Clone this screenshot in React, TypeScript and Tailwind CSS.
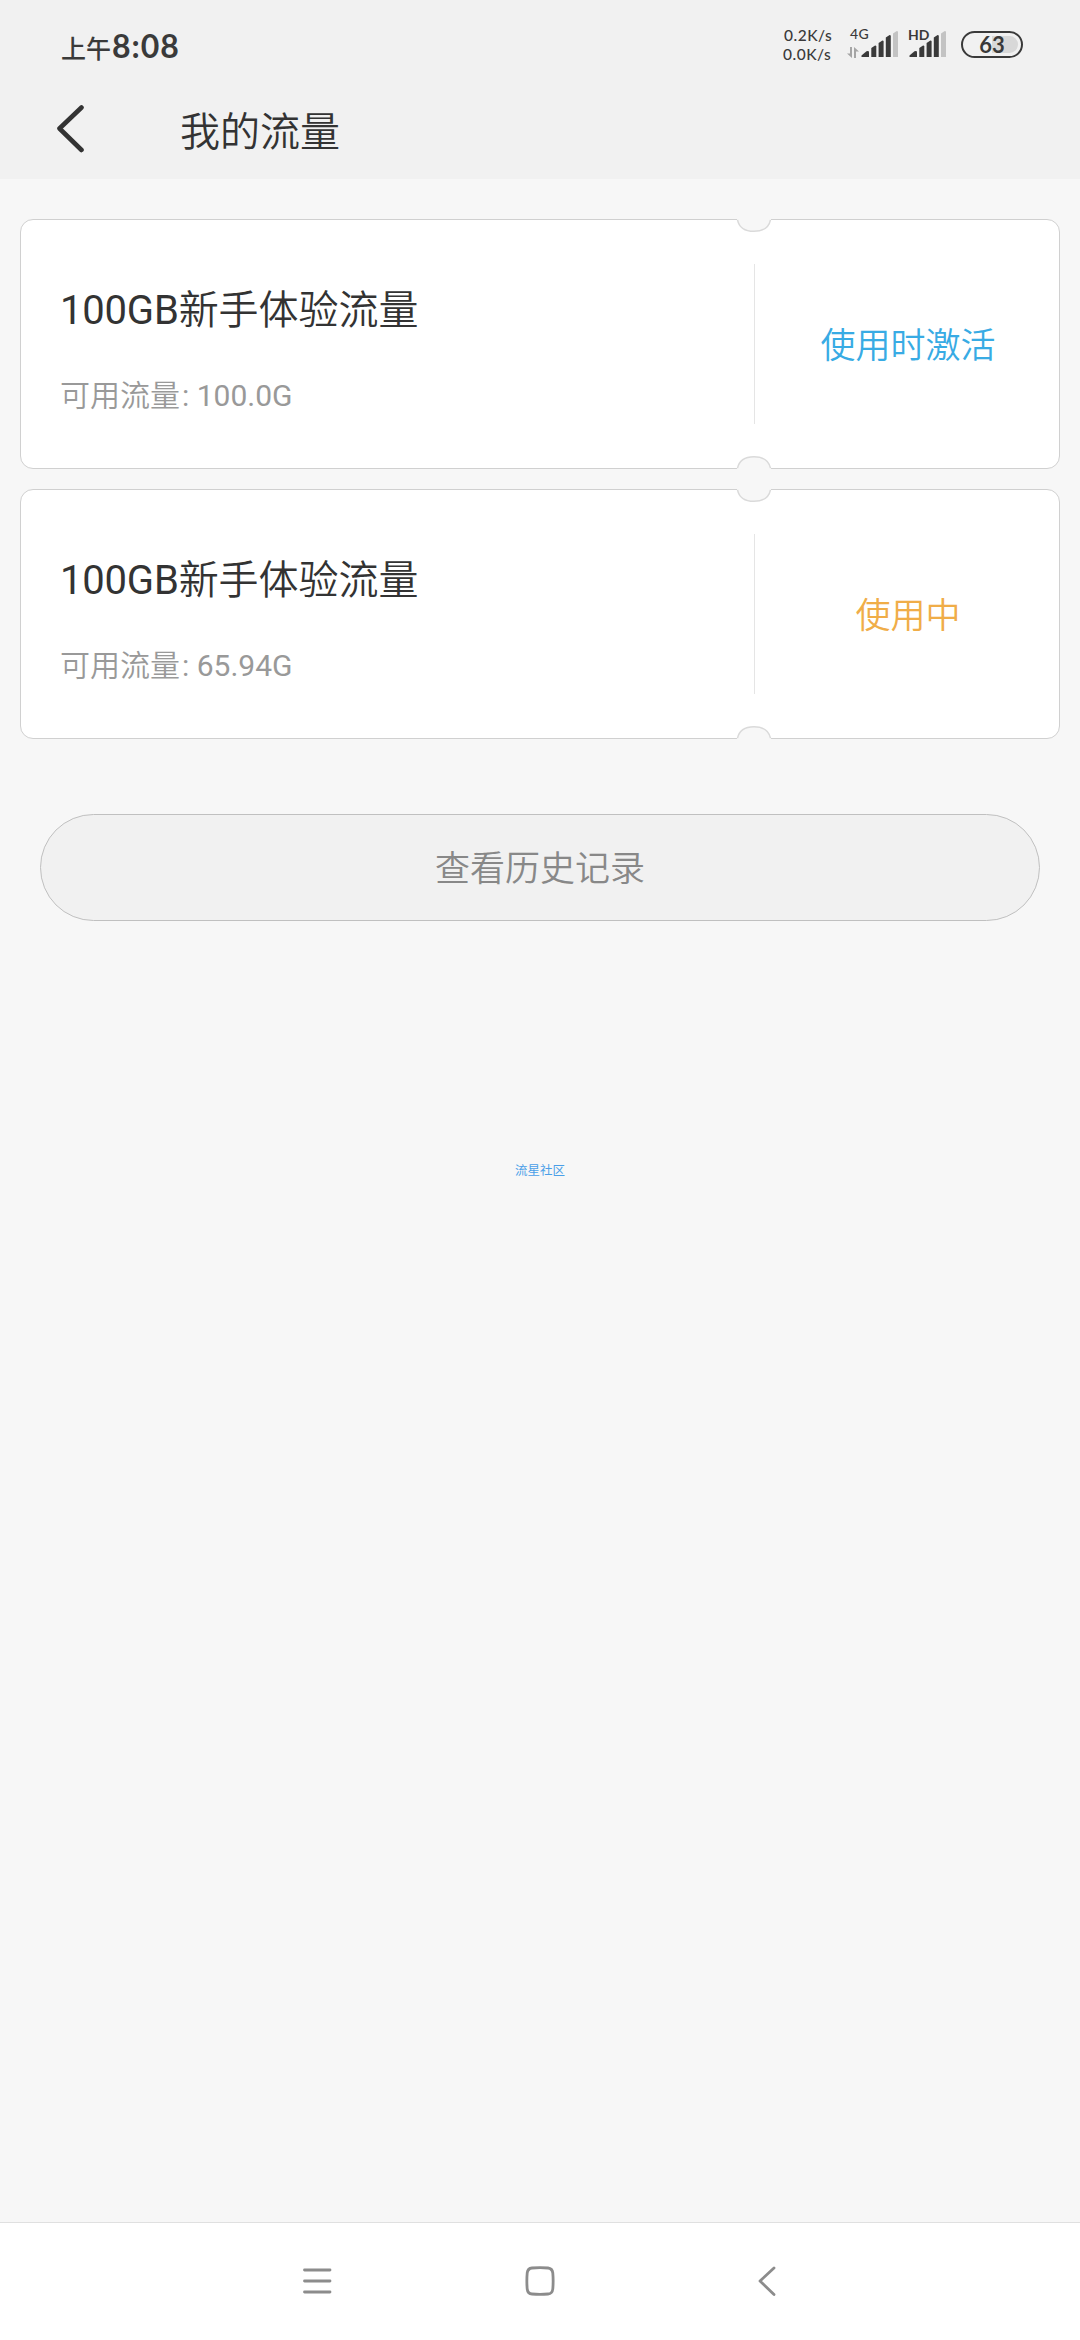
type Coupon = {
  id: number;
  size: string;
  name: string;
  remaining: string;
  status: string;
  active: boolean;
};

const coupons: Coupon[] = [
  { id: 1, size: "100GB", name: "新手体验流量", remaining: "100.0G", status: "使用时激活", active: false },
  { id: 2, size: "100GB", name: "新手体验流量", remaining: "65.94G", status: "使用中", active: true },
];

function SignalBars() {
  return (
    <svg className="h-[28px] w-[38px]" viewBox="0 0 38 28" fill="#3a3a3a">
      <path d="M0.500 27v-1.500l5-4.200q2.500-1 2.500 1V27z" />
      <path d="M10.300 27V18l3.800-2.500q1.200 0 1.200 1V27z" />
      <path d="M17.600 27V13l3.800-2.500q1.200 0 1.200 1V27z" />
      <path d="M24.800 27V7.500l3.800-2.500q1.200 0 1.200 1V27z" />
      <path fill="#c3c3c3" d="M32 27V3.500l3.800-2.500q1.200 0 1.200 1V27z" />
    </svg>
  );
}

function StatusBar() {
  return (
    <div className="flex h-[90px] items-start justify-between pl-[61px] pr-[57px] text-[#3a3a3a]">
      <div className="flex items-baseline pt-[26px] leading-[40px]">
        <span className="w-[51px] text-[25px] font-medium">上午</span>
        <span className="font-[Lato,sans-serif] text-[32px] font-bold tracking-[1px]">8:08</span>
      </div>
      <div className="flex items-start pt-[26px]">
        <div className="flex w-[64px] flex-col font-[Lato,sans-serif] text-[15.500px] leading-[19px] font-medium tracking-[0.500px]">
          <span className="pl-[1px]">0.2K/s</span>
          <span>0.0K/s</span>
        </div>
        <div className="relative mt-[4px] flex w-[62px] pl-[14px]">
          <span className="absolute -top-[4px] left-[3px] font-[Lato,sans-serif] text-[14px] leading-[16px] font-medium tracking-[0.500px]">4G</span>
          <svg className="absolute top-[16px] left-0 h-[13px] w-[12px]" viewBox="0 0 12 13" fill="#a5a5a5">
            <path d="M3 1h2v11L0 7.500h3zM7 12V1l5 4.500H9V12z" />
          </svg>
          <SignalBars />
        </div>
        <div className="relative mt-[4px] w-[52px]">
          <span className="absolute -top-[3px] -left-[1px] font-[Lato,sans-serif] text-[14px] leading-[16px] font-bold">HD</span>
          <SignalBars />
        </div>
        <div className="mt-[5px] flex h-[27px] w-[62px] rounded-full border-[2.500px] border-[#3a3a3a] p-[3px]">
          <div className="flex flex-1 items-center justify-center rounded-full bg-linear-to-r from-transparent from-50% to-[#d8d8d8] to-50% font-[Lato,sans-serif] text-[22px] leading-none font-bold">
            63
          </div>
        </div>
      </div>
    </div>
  );
}

function Header() {
  return (
    <header className="h-[179px] bg-[#f1f1f1]">
      <StatusBar />
      <div className="flex h-[80px] items-center pl-[56px]">
        <button aria-label="返回">
          <svg className="h-[50px] w-[30px]" viewBox="0 0 30 50" fill="none" stroke="#333" strokeWidth="4.600" strokeLinecap="round" strokeLinejoin="round">
            <path d="M25.500 2.500L3.500 23.500L25.500 45" />
          </svg>
        </button>
        <h1 className="ml-[94px] pt-[5px] text-[40px] leading-[60px] font-[350] text-[#333]">我的流量</h1>
      </div>
    </header>
  );
}

function Notch({ bottom = false }: { bottom?: boolean }) {
  return (
    <svg
      className={bottom ? "absolute -bottom-[2px] left-[715px] rotate-180" : "absolute -top-[2px] left-[715px]"}
      width="36"
      height="15"
      viewBox="0 0 36 15"
    >
      <path d="M1 0V1.500C3 9 9 13.500 18 13.500S33 9 35 1.500V0z" fill="#f7f7f7" />
      <path d="M1.500 1.800C3 9 9 13.300 18 13.300S33 9 34.500 1.800" fill="none" stroke="#dadada" strokeWidth="1.500" />
    </svg>
  );
}

function CouponCard({ coupon }: { coupon: Coupon }) {
  return (
    <div className="relative flex h-[250px] items-center rounded-[13px] border-[1.500px] border-[#d0d0d0] bg-white">
      <div className="flex w-[733px] flex-col pt-[11px] pl-[39px]">
        <h2 className="text-[40px] leading-[60px] font-[350] text-[#333]">
          <span className="font-normal tracking-[-0.200px]">{coupon.size}</span>
          {coupon.name}
        </h2>
        <p className="mt-[33px] text-[30px] leading-[44px] font-[350] text-[#999]">
          可用流量<span className="ml-[2px] font-normal">: {coupon.remaining}</span>
        </p>
      </div>
      <div className="flex h-[160px] flex-1 items-center justify-center border-l border-[#e5e5e5]">
        <span className={`pt-[5px] pl-[2px] text-[35px] leading-[52px] font-[350] ${coupon.active ? "text-[#f0ad48]" : "text-[#38abe4]"}`}>
          {coupon.status}
        </span>
      </div>
      <Notch />
      <Notch bottom />
    </div>
  );
}

function NavBar() {
  return (
    <nav className="flex h-[118px] items-center border-t border-[#e0e0e0] bg-white pb-[2px] pl-[302px]">
      <svg className="h-[32px] w-[30px]" viewBox="0 0 30 32" stroke="#8c8c8c" strokeWidth="2.800" strokeLinecap="round">
        <path d="M2.500 5h25.500M2.500 16h25.500M2.500 27h25.500" />
      </svg>
      <svg className="ml-[192px] h-[32px] w-[32px]" viewBox="0 0 32 32" fill="none" stroke="#8c8c8c" strokeWidth="2.800">
        <path d="M8 3Q16 2.200 24 3Q28.300 3.500 28.800 8Q29.500 16 28.800 24Q28.300 28.700 24 29Q16 29.800 8 29Q3.700 28.700 3.200 24Q2.500 16 3.200 8Q3.700 3.500 8 3z" />
      </svg>
      <svg className="ml-[201px] h-[32px] w-[20px]" viewBox="0 0 20 32" fill="none" stroke="#8c8c8c" strokeWidth="2.800" strokeLinecap="round" strokeLinejoin="round">
        <path d="M17 3L3 16L17 29.500" />
      </svg>
    </nav>
  );
}

export default function App() {
  return (
    <div className="flex h-[2340px] w-[1080px] flex-col bg-[#f7f7f7] font-[Roboto,'Noto_Sans_CJK_SC',sans-serif]">
      <Header />
      <main className="flex flex-1 flex-col px-[20px] pt-[40px]">
        <div className="flex flex-col gap-5">
          {coupons.map((coupon) => (
            <CouponCard key={coupon.id} coupon={coupon} />
          ))}
        </div>
        <button className="mx-[20px] mt-[75px] h-[107px] rounded-full border border-[#c0c0c0] bg-[#f1f1f1] pt-[5px] text-[35px] font-[350] text-[#888]">
          查看历史记录
        </button>
        <a className="mt-[240px] text-center text-[12.500px] leading-[20px] text-[#4a9fe8]">流星社区</a>
      </main>
      <NavBar />
    </div>
  );
}
